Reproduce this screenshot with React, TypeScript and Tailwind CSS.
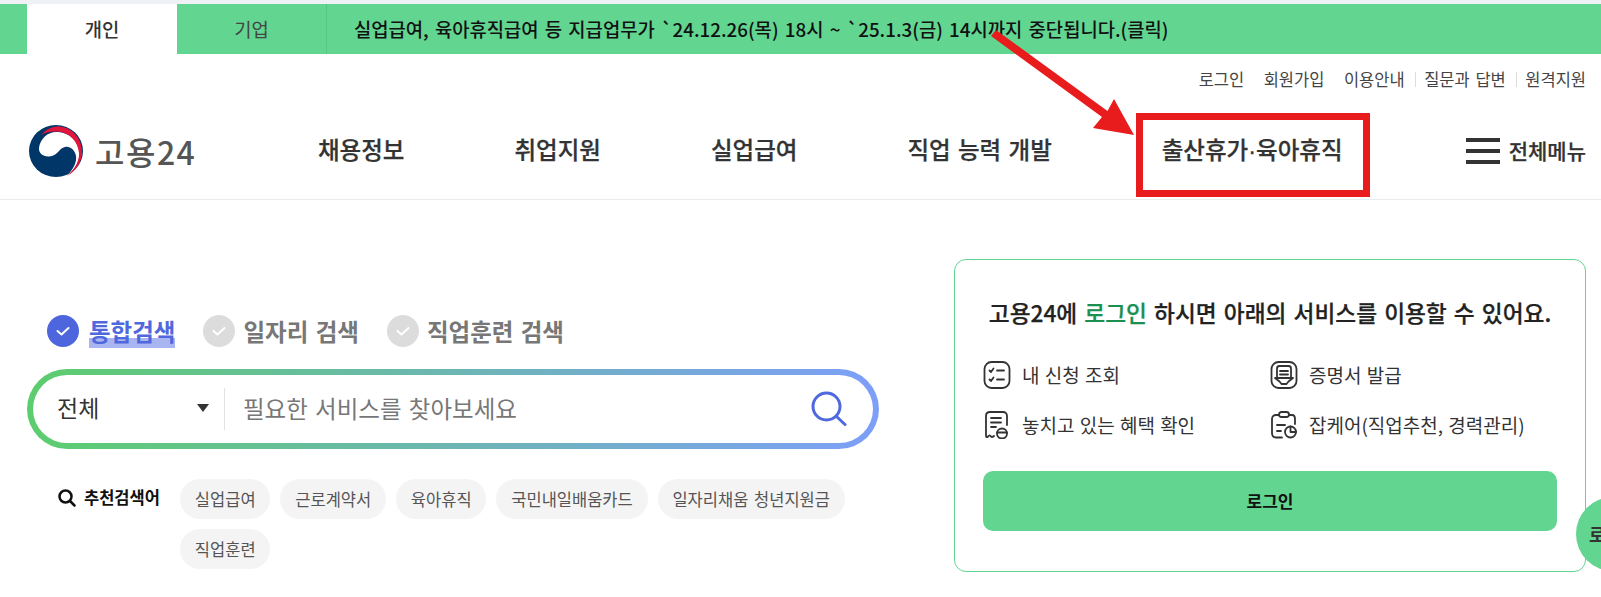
const topLinks = [
  { label: "로그인" },
  { label: "회원가입" },
  { label: "이용안내", divider: true },
  { label: "질문과 답변", divider: true },
  { label: "원격지원" },
]

const navItems = ["채용정보", "취업지원", "실업급여", "직업 능력 개발"]

const chips = ["실업급여", "근로계약서", "육아휴직", "국민내일배움카드", "일자리채움 청년지원금", "직업훈련"]

function Logo() {
  return (
    <svg width="54" height="52" viewBox="0 0 54 52">
      <ellipse cx="27" cy="26" rx="27" ry="26" fill="#003668" />
      <path d="M10 23C11 13 20 6 29 7C42 8 51 18 50.500 29C50 38 45 46 38 51C44 44 48 38 47 31C46 25 41 21 36 22C30 23 29 31 20 31.500C14 32 9.500 28 10 23Z" fill="#fff" />
      <path d="M12 10C18 3 25 1 31 1.500C44 3 53 14 53 27C53 37 47 46 38 51C46 44 50.500 36 50 28C49 16 40 7 28 6.500C22 6 16 7.500 12 10Z" fill="#e0143c" />
    </svg>
  )
}

function Radio({ label, active }: { label: string; active?: boolean }) {
  return (
    <div className={`flex items-center ${active ? "gap-[10px]" : "gap-[8px]"}`}>
      <span className={`flex h-8 w-8 items-center justify-center rounded-full ${active ? "bg-[#4d66dd]" : "bg-[#dcdcdc]"}`}>
        <svg width="16" height="12" viewBox="0 0 16 12" fill="none" stroke="#fff" strokeWidth="2" strokeLinecap="round" strokeLinejoin="round">
          <path d="M2.500 6L6.500 9.500L13.500 3" />
        </svg>
      </span>
      {active ? (
        <span className="bg-[linear-gradient(transparent_24px,#a9b5f0_24px)] text-[23.5px] leading-[34px] font-bold text-[#4f68dd]">{label}</span>
      ) : (
        <span className="text-[23.5px] leading-[34px] font-bold text-[#777]">{label}</span>
      )}
    </div>
  )
}

function ListIcon() {
  return (
    <svg width="28" height="28" viewBox="0 0 28 28" fill="none" stroke="#333" strokeWidth="1.800" strokeLinecap="round" strokeLinejoin="round">
      <rect x="1.500" y="1" width="25" height="26" rx="7" />
      <path d="M6.500 9.500L8 11L10.500 7.500M14 9.500H21M6.500 18.500L8 20L10.500 16.500M14 18.500H21" />
    </svg>
  )
}

function CertIcon() {
  return (
    <svg width="28" height="28" viewBox="0 0 28 28" fill="none" stroke="#333" strokeWidth="1.800" strokeLinecap="round" strokeLinejoin="round">
      <rect x="1.500" y="1" width="25" height="26" rx="7" />
      <path d="M7 17V7.500C7 6 8 5 9.500 5H18.500C20 5 21 6 21 7.500V17M5 17H23L18.500 20.500L16.500 23H11.500L9.500 20.500ZM10 10H18M10 13.500H18" />
    </svg>
  )
}

function ReceiptIcon() {
  return (
    <svg width="28" height="28" viewBox="0 0 28 28" fill="none" stroke="#333" strokeWidth="1.800" strokeLinecap="round" strokeLinejoin="round">
      <path d="M24 14V5C24 2.500 22.500 1 20 1H7C4.500 1 3 2.500 3 5V25C3 26.500 4.500 26.500 5 25.500C6 24 7 24 8 25.500C9 26.500 10 26 11 25" />
      <path d="M8 7H18M8 11.500H18M8 16H13" />
      <circle cx="19" cy="22.500" r="5" />
      <path d="M14 21.500H24" />
    </svg>
  )
}

function CareIcon() {
  return (
    <svg width="28" height="28" viewBox="0 0 28 28" fill="none" stroke="#333" strokeWidth="1.800" strokeLinecap="round" strokeLinejoin="round">
      <path d="M9 4H6C3.500 4 2 5.500 2 8V22C2 25 3.500 26.500 6 26.500H12M19 4H22C23.500 4 25 5.500 25 8V13" />
      <rect x="9" y="1" width="10" height="5" rx="2.500" />
      <path d="M7 14H15M7 20H11" />
      <circle cx="20.500" cy="21" r="5.500" />
      <path d="M20.500 15.500V21H26" />
    </svg>
  )
}

export default function App() {
  return (
    <div className="relative h-[597px] w-[1601px] overflow-hidden bg-white font-['Noto_Sans_CJK_KR',sans-serif] [word-spacing:2px]">
      {/* notice bar */}
      <div className="bg-[#eef1f6] pt-1">
        <div className="flex h-[50px] items-center bg-[#62d591] pl-[27px] text-[18.8px]">
          <div className="flex h-full w-[150px] items-center justify-center bg-white font-medium text-[#333]">개인</div>
          <div className="flex h-full w-[150px] items-center justify-center border-r border-[#57c583] text-[#444]">기업</div>
          <div className="pl-[27px] font-medium text-[#111]">
            실업급여, 육아휴직급여 등 지급업무가 `24.12.26(목) 18시 ~ `25.1.3(금) 14시까지 중단됩니다.(클릭)
          </div>
        </div>
      </div>

      {/* header */}
      <header className="h-[146px] border-b border-[#ebebeb]">
        <div className="flex h-[49px] items-center justify-end gap-[19.5px] pt-[2px] pr-[15px] text-[16.5px] text-[#444]">
          {topLinks.map((link) => (
            <div key={link.label} className="flex items-center gap-[10px]">
              <span>{link.label}</span>
              {link.divider && <span className="-mr-[11px] h-[15px] w-px bg-[#dddddd]" />}
            </div>
          ))}
        </div>
        <div className="mt-[22px] flex h-[52px] items-center pl-[29px]">
          <Logo />
          <span className="ml-[12px] w-[223px] text-[32px] font-medium tracking-[1.5px] text-[#555]">고용24</span>
          <nav className="flex gap-[110px] text-[23.5px] font-medium whitespace-nowrap text-[#333] [-webkit-text-stroke:0.25px_#333]">
            {navItems.map((item) => (
              <span key={item}>{item}</span>
            ))}
            <span>
              출산휴가<span className="font-['Liberation_Sans']">·</span>육아휴직
            </span>
          </nav>
          <div className="ml-auto flex items-center gap-[9px] pr-[15px] text-[21px] font-medium text-[#333] [-webkit-text-stroke:0.25px_#333]">
            <span className="flex w-[34px] flex-col gap-[7px]">
              <i className="h-[4px] bg-[#333]" />
              <i className="h-[4px] bg-[#333]" />
              <i className="h-[4px] bg-[#333]" />
            </span>
            전체메뉴
          </div>
        </div>
      </header>

      {/* main */}
      <main className="flex items-start pt-[59px] pl-[27px]">
        <section className="w-[852px] pt-[55px]">
          <div className="flex gap-[28px] pl-[20px]">
            <Radio label="통합검색" active />
            <Radio label="일자리 검색" />
            <Radio label="직업훈련 검색" />
          </div>

          <div className="mt-[21px] h-20 rounded-[40px] bg-[linear-gradient(90deg,#5ccd6e,#7d9ff8)] p-[6px]">
            <div className="flex h-full items-center rounded-[34px] bg-white pr-[26px] pl-[24px]">
              <div className="flex w-[168px] items-center justify-between border-r border-[#e3e3e3] pr-[15px] text-[23px] leading-[38px] text-[#333]">
                <span className="pb-1">전체</span>
                <span className="mb-[2px] h-0 w-0 border-x-[6px] border-t-[8px] border-x-transparent border-t-[#333]" />
              </div>
              <span className="ml-[18px] flex-1 text-[23.5px] text-[#777]">필요한 서비스를 찾아보세요</span>
              <svg width="36" height="36" viewBox="0 0 36 36" fill="none" stroke="#4f68dd" strokeWidth="3" strokeLinecap="round">
                <circle cx="15.500" cy="15.500" r="13.500" />
                <path d="M25.500 25.500L34 33.500" />
              </svg>
            </div>
          </div>

          <div className="mt-[30px] flex items-start">
            <div className="flex h-10 w-[153px] shrink-0 items-center gap-[8px] pb-[3px] pl-[31px] text-[16.5px] font-bold text-[#111]">
              <svg width="18" height="18" viewBox="0 0 18 18" fill="none" stroke="#111" strokeWidth="2.500" strokeLinecap="round">
                <circle cx="7.500" cy="7.500" r="6" />
                <path d="M12 12L16.500 16.500" />
              </svg>
              추천검색어
            </div>
            <div className="flex flex-wrap gap-[10px]">
              {chips.map((chip) => (
                <span key={chip} className="flex h-10 items-center rounded-[20px] bg-[#f4f4f4] px-[14.85px] text-[16.5px] text-[#555]">
                  {chip}
                </span>
              ))}
            </div>
          </div>
        </section>

        <section className="ml-[75px] h-[313px] w-[632px] shrink-0 rounded-[12px] border border-[#62d591] px-[28px] pt-[33px]">
          <h2 className="text-center text-[22.7px] leading-[40px] font-medium whitespace-nowrap text-[#222] [-webkit-text-stroke:0.25px]">
            고용24에 <span className="text-[#1a8f50]">로그인</span> 하시면 아래의 서비스를 이용할 수 있어요.
          </h2>
          <ul className="mt-[28px] grid grid-cols-[287px_1fr] gap-y-[22px] text-[19px] [word-spacing:1px] text-[#333]">
            <li className="flex h-7 items-center gap-[11px]"><ListIcon />내 신청 조회</li>
            <li className="flex h-7 items-center gap-[11px]"><CertIcon />증명서 발급</li>
            <li className="flex h-7 items-center gap-[11px]"><ReceiptIcon />놓치고 있는 혜택 확인</li>
            <li className="flex h-7 items-center gap-[11px]"><CareIcon />잡케어(직업추천, 경력관리)</li>
          </ul>
          <button className="mt-[32px] flex h-[60px] w-full items-center justify-center rounded-[10px] bg-[#62d591] text-[17px] font-bold text-[#111]">
            로그인
          </button>
        </section>
      </main>

      {/* floating login */}
      <div className="absolute top-[497px] left-[1576px] flex h-[74px] w-[74px] items-center rounded-full bg-[#62d591] pl-[13px] text-[18px] font-bold text-[#333]">
        로그인
      </div>

      {/* red annotation */}
      <div className="absolute top-[113px] left-[1136px] h-[84px] w-[234px] border-[7px] border-[#e81c1c]" />
      <svg className="absolute top-0 left-0" width="1601" height="200" fill="#e81c1c">
        <path d="M991 36L996 30L1107.500 111L1114 99L1134 135L1093 128L1102 117Z" />
      </svg>
    </div>
  )
}
